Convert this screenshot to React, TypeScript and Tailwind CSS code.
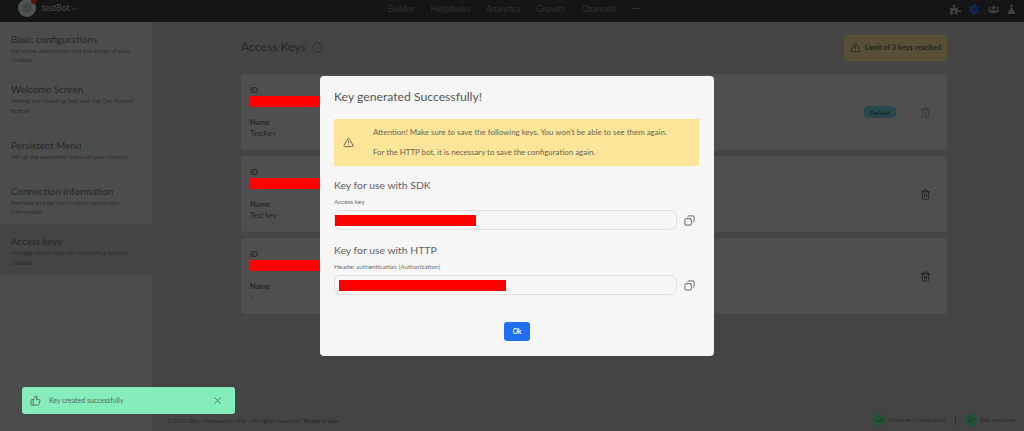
import { Check, ChevronDown, Copy, Info, MoreHorizontal, ThumbsUp, Trash2, TriangleAlert, X } from 'lucide-react'
import { FaCog, FaPuzzlePiece, FaUsers } from 'react-icons/fa'

const menuItems = [
  { title: 'Basic configurations', text: 'Set name, description and the image of your chatbot' },
  { title: 'Welcome Screen', text: 'Setting the Greeting Text and the Get Started Button' },
  { title: 'Persistent Menu', text: 'Set up the persistent menu of your chatbot' },
  { title: 'Connection information', text: 'Retrieve and set the chatbot connection information' },
  { title: 'Access keys', text: 'Manage access keys for connecting to your chatbot', active: true },
]

const keys = [
  { name: 'TestKey', isDefault: true },
  { name: 'Test key' },
  { name: '-' },
]

const navItems = ['Builder', 'Helpdesks', 'Analytics', 'Growth', 'Channels']

function Header() {
  return (
    <header className="flex h-[22px] shrink-0 items-center overflow-hidden bg-[#3c3c3c] pl-[18px] pr-[8px]">
      <div className="relative -mt-[6px] flex h-[18px] w-[18px] items-center justify-center rounded-full bg-[#e4ecee]">
        <span className="h-[10px] w-[10px] rounded-full bg-[#c4ccce]" />
        <span className="absolute -right-[1px] -top-[1px] h-[6px] w-[6px] rounded-full bg-[#ff2a3a]" />
      </div>
      <span className="ml-[6px] -mt-[5px] text-[8.5px] text-[#d8d8d8]">testBot</span>
      <ChevronDown className="ml-[1px] -mt-[4px] h-[8px] w-[8px] text-[#d8d8d8]" />
      <nav className="ml-[309px] -mt-[5px] flex w-[254px] items-center justify-between text-[8.7px] text-[#8a8a8a]">
        {navItems.map((item) => (
          <span key={item}>{item}</span>
        ))}
        <MoreHorizontal className="h-[9px] w-[9px] text-[#c8c8c8]" />
      </nav>
      <div className="ml-auto -mt-[3px] flex items-center gap-[8px] text-[#aeb8bd]">
        <FaPuzzlePiece className="h-[11px] w-[11px]" />
        <FaCog className="h-[11px] w-[11px] text-[#2d74f0]" />
        <FaUsers className="h-[11px] w-[11px]" />
        <svg viewBox="0 0 10 12" className="h-[11px] w-[9px]" fill="currentColor">
          <circle cx="5" cy="2" r="1.4" />
          <path d="M3.8 4h2.4l.5 3h1.6l.7 4H1l.7-4h1.6z" />
        </svg>
      </div>
    </header>
  )
}

function Sidebar() {
  return (
    <aside className="w-[152px] shrink-0 bg-[#d8dcdc]">
      {menuItems.map((item) => (
        <div
          key={item.title}
          className={`flex h-[50.6px] flex-col justify-center border-b border-[#d0d4d4] px-[11px] pt-[4px] ${item.active ? 'bg-[#c4c4c4]' : ''}`}
        >
          <div className="text-[9.8px] leading-[12px] text-[#6a6e6e]">{item.title}</div>
          <div className="mt-[1px] text-[6.2px] leading-[9.5px] text-[#7c8080]">{item.text}</div>
        </div>
      ))}
    </aside>
  )
}

function KeyCard({ name, isDefault }: { name: string; isDefault?: boolean }) {
  return (
    <div className="flex h-[76px] items-center rounded-[3px] bg-[#e2e2e2] pl-[9px] pr-[16px]">
      <div className="flex-1 text-[7.5px] text-[#6a6a6a]">
        <div className="font-bold leading-[10px]">ID</div>
        <div className="relative z-20 h-[11px] w-[70px] bg-[#ff0000]" />
        <div className="mt-[11px] font-bold leading-[10px]">Name</div>
        <div className="leading-[11px]">{name}</div>
      </div>
      {isDefault && (
        <span className="mr-[23px] rounded-full bg-[#74d2d8] px-[7px] py-[1.5px] text-[6px] font-bold text-[#3f6f75]">
          Default
        </span>
      )}
      <Trash2 className={`h-[11px] w-[11px] ${isDefault ? 'text-[#9a9a9a]' : 'text-[#555555]'}`} />
    </div>
  )
}

function KeyField({ title, label, barClass }: { title: string; label: string; barClass: string }) {
  return (
    <div>
      <h3 className="text-[10.4px] leading-[14px] text-[#606060]">{title}</h3>
      <div className="mt-[6px] text-[6.4px] leading-[8px] text-[#6f6f6f]">{label}</div>
      <div className="mt-[4px] flex items-center gap-[7px]">
        <div className="flex h-[20px] w-[343px] items-center rounded-[6px] border border-[#e0e0e0]">
          <div className={`h-[11px] bg-[#ff0000] ${barClass}`} />
        </div>
        <Copy className="h-[11px] w-[11px] -scale-x-100 text-[#5f5f5f]" />
      </div>
    </div>
  )
}

function KeyModal() {
  return (
    <div className="fixed inset-0 z-10 bg-black/65 pl-[320px] pt-[76px]">
      <div className="h-[280px] w-[394px] rounded-[4px] bg-[#f6f6f6] px-[14px] pt-[13px] font-['Lato',sans-serif]">
        <h2 className="text-[12.2px] leading-[16px] text-[#555555]">Key generated Successfully!</h2>
        <div className="mt-[14px] flex h-[47px] w-[365px] items-center bg-[#fde59a] pl-[9px]">
          <TriangleAlert className="h-[11px] w-[11px] text-[#5f5f4a]" />
          <div className="ml-[19px] text-[7.9px] text-[#6a6550]">
            <p>Attention! Make sure to save the following keys. You won't be able to see them again.</p>
            <p className="mt-[8px]">For the HTTP bot, it is necessary to save the configuration again.</p>
          </div>
        </div>
        <div className="mt-[12px] flex flex-col gap-[13px]">
          <KeyField title="Key for use with SDK" label="Access key" barClass="w-[141px]" />
          <KeyField title="Key for use with HTTP" label="Header authentication (Authorization)" barClass="ml-[4px] w-[167px]" />
        </div>
        <div className="mt-[27px] flex justify-center">
          <button className="h-[19px] w-[26px] rounded-[3px] bg-[#1f6ff0] text-[6.5px] font-bold text-white">Ok</button>
        </div>
      </div>
    </div>
  )
}

function Toast() {
  return (
    <div className="fixed bottom-[17px] left-[22px] z-30 flex h-[27px] w-[213px] items-center rounded-[3px] bg-[#85edbb] pl-[8px] pr-[12px] font-['Lato',sans-serif] text-[#5c6a64]">
      <ThumbsUp className="h-[11px] w-[11px]" />
      <span className="ml-[8px] flex-1 text-[7px]">Key created successfully</span>
      <X className="h-[11px] w-[11px]" />
    </div>
  )
}

function StatusDot() {
  return (
    <span className="flex h-[12px] w-[12px] items-center justify-center rounded-full bg-[#5fe89c] text-[#444444]">
      <Check className="h-[7px] w-[7px]" />
    </span>
  )
}

export default function App() {
  return (
    <div className="flex h-[431px] flex-col overflow-hidden bg-[#c3c3c3] font-['Lato',sans-serif]">
      <Header />
      <div className="flex flex-1">
        <Sidebar />
        <main className="flex flex-1 flex-col pl-[89px] pr-[77px] pt-[11px]">
          <div className="flex h-[33px] items-center justify-between border-b border-[#cbcbcb] pb-[3px]">
            <div className="flex items-center gap-[6px] text-[#6c6c6c]">
              <h1 className="text-[12.2px]">Access Keys</h1>
              <Info className="h-[11px] w-[11px]" />
            </div>
            <div className="flex h-[26px] w-[103px] items-center justify-center gap-[4px] bg-[#fde59a] text-[7.5px] font-bold text-[#6a6550]">
              <TriangleAlert className="h-[11px] w-[11px]" />
              Limit of 3 keys reached
            </div>
          </div>
          <div className="mt-[8px] flex flex-col gap-[6px]">
            {keys.map((key) => (
              <KeyCard key={key.name} name={key.name} isDefault={key.isDefault} />
            ))}
          </div>
          <footer className="mt-auto flex h-[22px] items-center justify-between text-[6px] text-[#7a7a7a]">
            <span className="-ml-[74px]">
              © 2025 Blip - Powered by Blip | All rights reserved | <b>Terms of Use</b>
            </span>
            <div className="-mr-[70px] flex h-[16px] items-center gap-[3px] rounded-[3px] border border-[#bcbcbc] px-[1px] text-[6.5px]">
              <StatusDot />
              Internet Connection
              <span className="mx-[6px] h-[9px] w-px bg-[#888888]" />
              <StatusDot />
              Blip services
            </div>
          </footer>
        </main>
      </div>
      <KeyModal />
      <Toast />
    </div>
  )
}
